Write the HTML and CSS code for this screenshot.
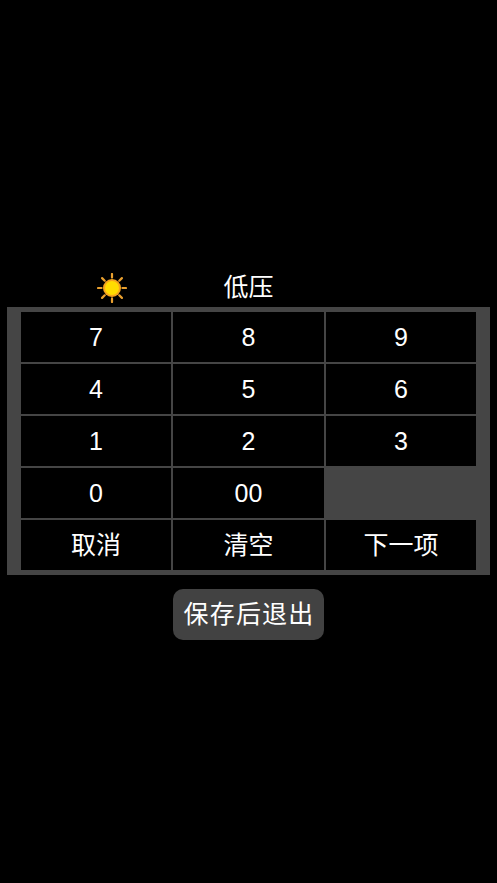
FILE: index.html
```html
<!DOCTYPE html>
<html lang="zh">
<head>
<meta charset="utf-8">
<title>低压</title>
<link rel="stylesheet" href="styles.css">
</head>
<body>
<main class="page">
  <header class="head">
    <svg class="sun" viewBox="0 0 30 30" aria-hidden="true">
      <g stroke="#e9a02f" stroke-width="2.2" stroke-linecap="round">
        <path d="M15 1v3.6M15 25.4v3.6M1 15h3.6M25.4 15h3.6M5.1 5.1l2.6 2.6M22.3 22.3l2.6 2.6M5.1 24.9l2.6-2.6M22.3 7.7l2.6-2.6"/>
      </g>
      <circle cx="15" cy="15" r="9" fill="#f7a41d"/>
      <circle cx="15" cy="15" r="7" fill="#ffdc00"/>
    </svg>
    <h1 class="title">低压</h1>
  </header>
  <section class="panel">
    <div class="keys">
      <button class="key">7</button>
      <button class="key">8</button>
      <button class="key">9</button>
      <button class="key">4</button>
      <button class="key">5</button>
      <button class="key">6</button>
      <button class="key">1</button>
      <button class="key">2</button>
      <button class="key">3</button>
      <button class="key">0</button>
      <button class="key">00</button>
      <div class="blank"></div>
      <button class="key">取消</button>
      <button class="key">清空</button>
      <button class="key">下一项</button>
    </div>
  </section>
  <div class="actions">
    <button class="save">保存后退出</button>
  </div>
</main>
</body>
</html>
```
FILE: styles.css
```css
* { box-sizing: border-box; }
html, body { margin: 0; height: 100%; background: #000; overflow: hidden; }
body { font-family: "Liberation Sans", "Noto Sans CJK SC", sans-serif; color: #fff; }
.page { padding: 272px 7px 0; }
.head { display: flex; align-items: center; height: 35px; position: relative; }
.sun { width: 30px; height: 30px; margin-left: 90px; margin-bottom: 3px; }
.title {
  position: absolute; left: 0; right: 0; top: 0; margin: 0;
  text-align: center; font-size: 25px; font-weight: 400; line-height: 30px;
}
.panel { height: 268px; background: #454545; padding: 5px 14px 0; }
.keys { display: grid; grid-template-columns: 150px 151px 150px; grid-auto-rows: 50px; gap: 2px; }
.key {
  border: 0; padding: 0; background: #000; color: #fff;
  font: inherit; font-size: 25px; line-height: 50px;
}
.actions { display: flex; justify-content: center; margin-top: 14px; }
.save {
  width: 151px; height: 51px; border: 0; padding: 0 0 5px 1px; border-radius: 10px;
  background: #424242; color: #fff; font: inherit; font-size: 25px; letter-spacing: 1.2px;
}
```
